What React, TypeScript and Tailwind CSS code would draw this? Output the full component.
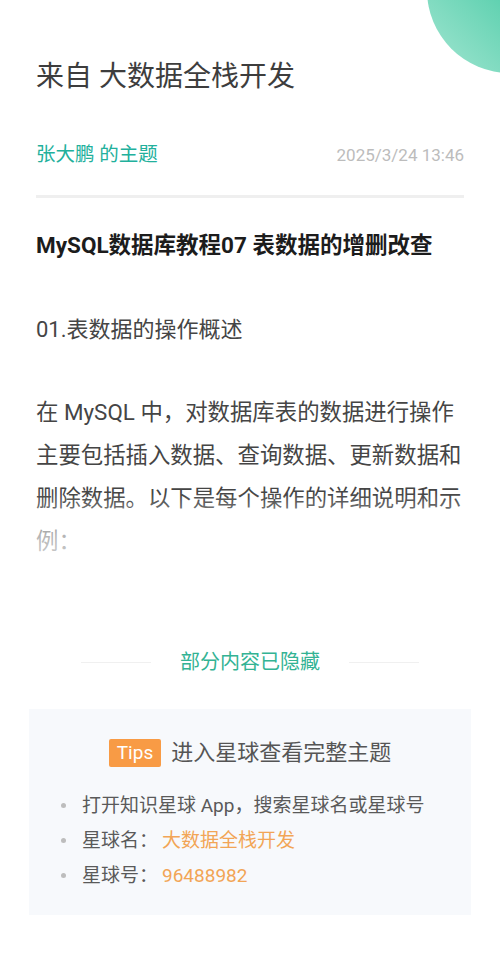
export default function App() {
  const font = 'font-[Roboto,"Noto_Sans_CJK_SC",sans-serif]';

  return (
    <div className={`relative min-h-[953px] w-[500px] overflow-hidden bg-white ${font}`}>
      {/* corner decoration */}
      <div className="absolute -right-[93px] -top-[93px] h-[166px] w-[166px] rounded-full bg-[linear-gradient(225deg,#20b993_0%,#5fd1b0_55%,#a4e6d2_100%)]" />

      <div className="px-[36px] pt-[57px]">
        <h1 className="text-[28px] leading-[40px] font-normal text-[#3d3d3d]">来自 大数据全栈开发</h1>

        <div className="mt-[44px] flex items-center justify-between">
          <span className="text-[19.5px] leading-[28px] text-[#22b09c]">张大鹏 的主题</span>
          <span className="text-[17px] leading-[28px] text-[#bcbcbc]">2025/3/24 13:46</span>
        </div>

        <div className="mt-[26px] h-[3px] bg-[#efefef]" />

        <h2 className="mt-[31px] text-[22.5px] leading-[32px] font-bold text-[#1c1c1c]">
          MySQL数据库教程07 表数据的增删改查
        </h2>

        <p className="mt-[53px] text-[22px] leading-[32px] text-[#454545]">01.表数据的操作概述</p>

        <div className="relative mt-[45px]">
          <p className="text-[22.4px] leading-[43px] text-[#454545]">
            在 MySQL 中，对数据库表的数据进行操作主要包括插入数据、查询数据、更新数据和删除数据。以下是每个操作的详细说明和示例：
          </p>
          <div className="pointer-events-none absolute inset-x-0 bottom-0 h-[70px] bg-[linear-gradient(to_bottom,rgba(255,255,255,0)_0%,rgba(255,255,255,0.6)_60%,rgba(255,255,255,0.75)_100%)]" />
        </div>

        <div className="mt-[85px] flex items-center justify-center gap-[29px]">
          <div className="h-px w-[70px] bg-[#f0f0f0]" />
          <span className="text-[20px] leading-[28px] text-[#33b394]">部分内容已隐藏</span>
          <div className="h-px w-[70px] bg-[#f0f0f0]" />
        </div>

        <div className="-mx-[7px] mt-[33px] bg-[#f7f9fc] pb-[22px] pt-[30px]">
          <div className="flex items-center justify-center gap-[10px]">
            <span className="rounded-[2px] bg-[#f89b45] px-[8px] text-[19px] leading-[28px] text-white">Tips</span>
            <span className="text-[22px] leading-[28px] text-[#555555]">进入星球查看完整主题</span>
          </div>

          <ul className="mt-[21px] pl-[32px] text-[19px] leading-[35px] text-[#5a5a5a]">
            <li className="flex items-center gap-[16px]">
              <span className="h-[5px] w-[5px] rounded-full bg-[#bdbdbd]" />
              <span>打开知识星球 App，搜索星球名或星球号</span>
            </li>
            <li className="flex items-center gap-[16px]">
              <span className="h-[5px] w-[5px] rounded-full bg-[#bdbdbd]" />
              <span>
                星球名：<span className="ml-[4px] text-[#f2a556]">大数据全栈开发</span>
              </span>
            </li>
            <li className="flex items-center gap-[16px]">
              <span className="h-[5px] w-[5px] rounded-full bg-[#bdbdbd]" />
              <span>
                星球号：<span className="ml-[4px] text-[#f2a556]">96488982</span>
              </span>
            </li>
          </ul>
        </div>
      </div>
    </div>
  );
}
